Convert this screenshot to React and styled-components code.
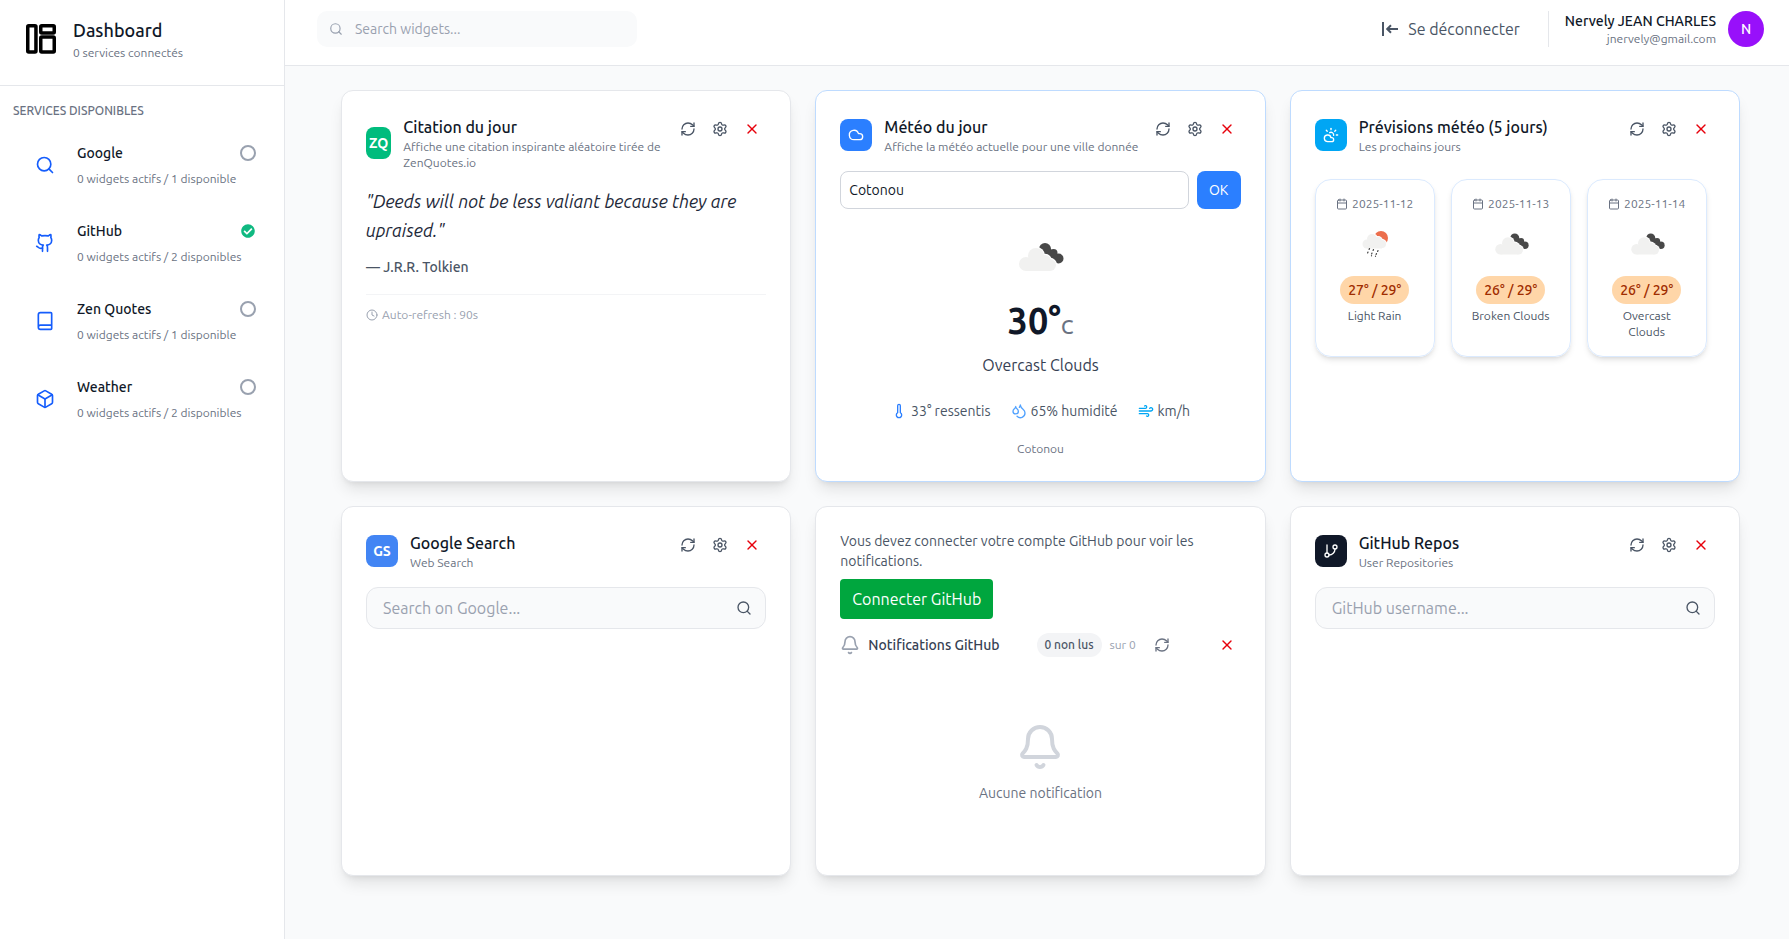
import React, { useState } from 'react'
import styled, { createGlobalStyle } from 'styled-components'
import {
    Bell,
    Book,
    Box,
    Calendar,
    Clock,
    Cloud,
    CloudSun,
    Droplets,
    GitBranch,
    Github,
    RefreshCw,
    Search,
    Settings,
    Thermometer,
    Wind,
    X,
} from 'lucide-react'
import { FaCheckCircle } from 'react-icons/fa'

const services = [
    { name: 'Google', detail: '0 widgets actifs / 1 disponible', Icon: Search, connected: false },
    { name: 'GitHub', detail: '0 widgets actifs / 2 disponibles', Icon: Github, connected: true },
    { name: 'Zen Quotes', detail: '0 widgets actifs / 1 disponible', Icon: Book, connected: false },
    { name: 'Weather', detail: '0 widgets actifs / 2 disponibles', Icon: Box, connected: false },
]

const forecast = [
    { date: '2025-11-12', icon: 'rain', temps: '27° / 29°', label: 'Light Rain' },
    { date: '2025-11-13', icon: 'clouds', temps: '26° / 29°', label: 'Broken Clouds' },
    { date: '2025-11-14', icon: 'clouds', temps: '26° / 29°', label: 'Overcast Clouds' },
]

function DashboardLogo() {
    return (
        <svg width="36" height="36" viewBox="0 0 36 36" fill="none" stroke="#000" strokeWidth="3.5" strokeLinejoin="round">
            <rect x="4.75" y="3.75" width="8.2" height="26.2" rx="1" />
            <rect x="17.75" y="3.75" width="13.5" height="7.2" rx="1" />
            <rect x="17.75" y="15" width="13.5" height="15" rx="1" />
        </svg>
    )
}

function LogoutIcon() {
    return (
        <svg width="20" height="20" viewBox="0 0 20 20" fill="none" stroke="currentColor" strokeWidth="2">
            <path d="M3 3v14M18 10H7.500M11 6.200L7.200 10L11 13.800" />
        </svg>
    )
}

function CloudsIcon({ size }) {
    const puffs = [[18, 39, 7], [28, 31, 8], [37, 36, 6], [42, 40, 6]]

    return (
        <svg width={size} height={size} viewBox="0 0 64 64">
            <g fill="#484848">
                <circle cx="37" cy="24" r="6" />
                <circle cx="45.5" cy="28" r="4" />
                <circle cx="50.5" cy="33.500" r="5" />
                <path d="M33 28L49 38L50 30L40 22Z" />
            </g>
            <g fill="#fff">
                {puffs.map(([cx, cy, r]) => <circle key={cx} cx={cx} cy={cy} r={r + 1.2} />)}
            </g>
            <g fill="#f1f1f0">
                {puffs.map(([cx, cy, r]) => <circle key={cx} cx={cx} cy={cy} r={r} />)}
                <rect x="18" y="34" width="24" height="12" />
            </g>
        </svg>
    )
}

function RainIcon({ size }) {
    const puffs = [[16, 24, 4.5], [21, 19, 5], [27, 21, 4], [31, 24, 4]]

    return (
        <svg width={size} height={size} viewBox="0 0 48 48">
            <circle cx="30" cy="18" r="7" fill="#ec6e4c" />
            <g fill="#fff">
                {puffs.map(([cx, cy, r]) => <circle key={cx} cx={cx} cy={cy} r={r + 1} />)}
            </g>
            <g fill="#f1f1f0">
                {puffs.map(([cx, cy, r]) => <circle key={cx} cx={cx} cy={cy} r={r} />)}
                <rect x="16" y="22" width="15" height="6.500" />
            </g>
            <g stroke="#484848" strokeWidth="1.200" strokeLinecap="round">
                <path d="M18.500 28.500l-.4 1M22.500 29.500l-.4 1M27 30.500l-.4 1" />
                <path d="M17 32l-.4 1M21 33l-.4 1M25.500 33.500l-.4 1M20.500 35.500v.3M24.500 36v.3" />
            </g>
        </svg>
    )
}

function WidgetHeader({ title, subtitle, icon, color }) {
    return (
        <HeaderRow>
            <HeaderInfo>
                <Badge $color={color}>{icon}</Badge>
                <div>
                    <WidgetTitle>{title}</WidgetTitle>
                    <WidgetSubtitle>{subtitle}</WidgetSubtitle>
                </div>
            </HeaderInfo>
            <Actions>
                <IconButton aria-label="Actualiser"><RefreshCw size={16} /></IconButton>
                <IconButton aria-label="Configurer"><Settings size={16} /></IconButton>
                <IconButton aria-label="Supprimer" $danger><X size={16} /></IconButton>
            </Actions>
        </HeaderRow>
    )
}

function SearchField({ placeholder }) {
    return (
        <SearchBox>
            <SearchInput type="text" placeholder={placeholder} aria-label={placeholder} />
            <SubmitButton aria-label="Rechercher"><Search size={16} /></SubmitButton>
        </SearchBox>
    )
}

function App() {
    const [city, setCity] = useState('Cotonou')

    return (
        <Page>
            <GlobalStyle />
            <Sidebar>
                <Brand>
                    <DashboardLogo />
                    <div>
                        <BrandName>Dashboard</BrandName>
                        <SmallText>0 services connectés</SmallText>
                    </div>
                </Brand>
                <SectionTitle>SERVICES DISPONIBLES</SectionTitle>
                <ServiceList>
                    {services.map(({ name, detail, Icon, connected }) => (
                        <Service key={name}>
                            <Icon size={20} />
                            <ServiceText>
                                <ServiceTop>
                                    {name}
                                    <Status>
                                        {connected ? <FaCheckCircle size={14} /> : <EmptyCircle />}
                                    </Status>
                                </ServiceTop>
                                <SmallText>{detail}</SmallText>
                            </ServiceText>
                        </Service>
                    ))}
                </ServiceList>
            </Sidebar>

            <Content>
                <TopBar>
                    <TopSearch>
                        <Search size={14} />
                        <TopInput type="text" placeholder="Search widgets..." aria-label="Search widgets..." />
                    </TopSearch>
                    <Account>
                        <Logout>
                            <LogoutIcon />
                            Se déconnecter
                        </Logout>
                        <User>
                            <UserText>
                                <UserName>Nervely JEAN CHARLES</UserName>
                                <UserEmail>jnervely@gmail.com</UserEmail>
                            </UserText>
                            <Avatar>N</Avatar>
                        </User>
                    </Account>
                </TopBar>

                <Grid>
                    <Card>
                        <WidgetHeader
                            title="Citation du jour"
                            subtitle="Affiche une citation inspirante aléatoire tirée de ZenQuotes.io"
                            icon="ZQ"
                            color="#00bc7d"
                        />
                        <Quote>"Deeds will not be less valiant because they are upraised."</Quote>
                        <Author>— J.R.R. Tolkien</Author>
                        <QuoteFooter>
                            <Clock size={12} />
                            Auto-refresh : 90s
                        </QuoteFooter>
                    </Card>

                    <Card $blue>
                        <WidgetHeader
                            title="Météo du jour"
                            subtitle="Affiche la météo actuelle pour une ville donnée"
                            icon={<Cloud size={16} />}
                            color="#2b7fff"
                        />
                        <CityForm onSubmit={(e) => e.preventDefault()}>
                            <CityInput value={city} onChange={(e) => setCity(e.target.value)} aria-label="Ville" />
                            <OkButton type="submit">OK</OkButton>
                        </CityForm>
                        <Weather>
                            <CloudsIcon size={64} />
                            <Temperature>30°<Unit>C</Unit></Temperature>
                            <Conditions>Overcast Clouds</Conditions>
                            <Details>
                                <Detail $color="#2b7fff"><Thermometer size={16} />33° ressentis</Detail>
                                <Detail $color="#51a2ff"><Droplets size={16} />65% humidité</Detail>
                                <Detail $color="#00a6f4"><Wind size={16} />km/h</Detail>
                            </Details>
                            <WidgetSubtitle>Cotonou</WidgetSubtitle>
                        </Weather>
                    </Card>

                    <Card $blue>
                        <WidgetHeader
                            title="Prévisions météo (5 jours)"
                            subtitle="Les prochains jours"
                            icon={<CloudSun size={16} />}
                            color="#00a6f4"
                        />
                        <Days>
                            {forecast.map(day => (
                                <Day key={day.date}>
                                    <DayDate><Calendar size={12} />{day.date}</DayDate>
                                    {day.icon === 'rain' ? <RainIcon size={48} /> : <CloudsIcon size={48} />}
                                    <Temps>{day.temps}</Temps>
                                    <DayLabel>{day.label}</DayLabel>
                                </Day>
                            ))}
                        </Days>
                    </Card>

                    <Card>
                        <WidgetHeader title="Google Search" subtitle="Web Search" icon="GS" color="#4285f4" />
                        <SearchField placeholder="Search on Google..." />
                    </Card>

                    <Card>
                        <Notice>Vous devez connecter votre compte GitHub pour voir les notifications.</Notice>
                        <ConnectButton>Connecter GitHub</ConnectButton>
                        <NotifHeader>
                            <NotifTitle><Bell size={20} />Notifications GitHub</NotifTitle>
                            <NotifCounts>
                                <Unread>0 non lus</Unread>
                                <Total>sur 0</Total>
                                <RefreshButton aria-label="Actualiser"><RefreshCw size={16} /></RefreshButton>
                            </NotifCounts>
                            <IconButton aria-label="Supprimer" $danger><X size={16} /></IconButton>
                        </NotifHeader>
                        <Empty>
                            <Bell size={48} />
                            Aucune notification
                        </Empty>
                    </Card>

                    <Card>
                        <WidgetHeader
                            title="GitHub Repos"
                            subtitle="User Repositories"
                            icon={<GitBranch size={16} />}
                            color="#101828"
                        />
                        <SearchField placeholder="GitHub username..." />
                    </Card>
                </Grid>
            </Content>
        </Page>
    )
}

export default App


const GlobalStyle = createGlobalStyle`
    * {
        box-sizing: border-box;
    }
    body {
        margin: 0;
        background: #f9fafb;
        color: #101828;
        font-family: Ubuntu, Roboto, "Noto Sans", sans-serif;
        font-size: 16px;
        line-height: 24px;
    }
    button, input {
        font: inherit;
        color: inherit;
    }
    button {
        border: 0;
        background: none;
        padding: 0;
        cursor: pointer;
    }
    input::placeholder {
        color: #99a1af;
        opacity: 1;
    }
    svg {
        flex-shrink: 0;
    }
`

const Page = styled.div`
    display: flex;
    min-height: 100vh;
`

const Sidebar = styled.aside`
    width: 285px;
    flex-shrink: 0;
    background: white;
    border-right: 1px solid #e5e7eb;
`

const Brand = styled.div`
    display: flex;
    align-items: center;
    gap: 14px;
    padding: 17px 23px 22px;
    border-bottom: 1px solid #e5e7eb;
`

const BrandName = styled.h1`
    margin: 0;
    font-size: 18px;
    font-weight: 550;
    line-height: 26px;
`

const SmallText = styled.div`
    font-size: 12px;
    line-height: 20px;
    color: #6a7282;
`

const SectionTitle = styled.h2`
    margin: 17px 13px 14px;
    font-size: 12px;
    font-weight: 500;
    line-height: 16px;
    color: #6a7282;
`

const ServiceList = styled.div`
    display: flex;
    flex-direction: column;
    gap: 14px;
`

const Service = styled.button`
    display: flex;
    align-items: center;
    gap: 22px;
    padding: 8px 28px 8px 35px;
    height: 64px;
    text-align: left;
    color: #155dfc;
`

const ServiceText = styled.div`
    flex: 1;
`

const ServiceTop = styled.div`
    display: flex;
    align-items: center;
    justify-content: space-between;
    margin-bottom: 4px;
    font-size: 14px;
    font-weight: 500;
    color: #101828;
`

const Status = styled.span`
    display: flex;
    justify-content: center;
    width: 16px;
    color: #10b981;
`

const EmptyCircle = styled.span`
    width: 16px;
    height: 16px;
    border: 2px solid #99a1af;
    border-radius: 50%;
`

const Content = styled.div`
    flex: 1;
    min-width: 0;
`

const TopBar = styled.header`
    display: flex;
    align-items: flex-start;
    justify-content: space-between;
    height: 66px;
    padding: 11px 25px 0 32px;
    background: white;
    border-bottom: 1px solid #e5e7eb;
`

const TopSearch = styled.div`
    display: flex;
    align-items: center;
    gap: 12px;
    width: 320px;
    height: 36px;
    padding: 0 12px;
    border-radius: 10px;
    background: #f9fafb;
    color: #99a1af;
`

const TopInput = styled.input`
    flex: 1;
    min-width: 0;
    border: 0;
    padding: 0;
    background: none;
    font-size: 14px;
    outline: none;
`

const Account = styled.div`
    display: flex;
    align-items: center;
    gap: 28px;
`

const Logout = styled.button`
    display: flex;
    align-items: center;
    gap: 8px;
    color: #4a5565;
`

const User = styled.div`
    display: flex;
    align-items: center;
    gap: 12px;
    height: 36px;
    padding-left: 16px;
    border-left: 1px solid #e5e7eb;
`

const UserText = styled.div`
    text-align: right;
`

const UserName = styled.div`
    font-size: 14px;
    font-weight: 500;
    line-height: 20px;
`

const UserEmail = styled(SmallText)`
    line-height: 16px;
`

const Avatar = styled.div`
    display: flex;
    align-items: center;
    justify-content: center;
    width: 36px;
    height: 36px;
    border-radius: 50%;
    background: #9810fa;
    color: white;
    font-size: 14px;
    font-weight: 500;
`

const Grid = styled.main`
    display: grid;
    grid-template-columns: repeat(3, minmax(0, 1fr));
    grid-template-rows: auto minmax(370px, auto);
    gap: 24px;
    padding: 24px 49px 62px 56px;
`

const Card = styled.section`
    padding: 24px;
    background: white;
    border: 1px solid ${props => props.$blue ? '#bedbff' : '#e5e7eb'};
    border-radius: 12px;
    box-shadow: 0 10px 15px -3px rgba(0, 0, 0, 0.1), 0 4px 6px -4px rgba(0, 0, 0, 0.1);
`

const HeaderRow = styled.div`
    display: flex;
    align-items: flex-start;
    justify-content: space-between;
    gap: 8px;
    margin-bottom: 16px;
`

const HeaderInfo = styled.div`
    display: flex;
    align-items: center;
    gap: 12px;
    min-width: 0;
`

const Badge = styled.div`
    display: flex;
    align-items: center;
    justify-content: center;
    width: 32px;
    height: 32px;
    border-radius: 8px;
    background: ${props => props.$color};
    color: white;
    font-size: 14px;
    font-weight: 600;
`

const WidgetTitle = styled.h3`
    margin: 0;
    font-size: 16px;
    font-weight: 550;
    line-height: 24px;
`

const WidgetSubtitle = styled.div`
    font-size: 12px;
    line-height: 16px;
    color: #6a7282;
`

const Actions = styled.div`
    display: flex;
    gap: 4px;
`

const IconButton = styled.button`
    display: flex;
    align-items: center;
    justify-content: center;
    width: 28px;
    height: 28px;
    color: ${props => props.$danger ? '#e7000b' : '#4a5565'};
`

const Quote = styled.p`
    margin: 0;
    font-size: 18px;
    font-style: italic;
    line-height: 29px;
    color: #1e2939;
`

const Author = styled.div`
    margin-top: 12px;
    font-size: 14px;
    font-weight: 500;
    line-height: 20px;
    color: #4a5565;
`

const QuoteFooter = styled.div`
    display: flex;
    align-items: center;
    gap: 4px;
    margin-top: 17px;
    padding-top: 12px;
    border-top: 1px solid #f3f4f6;
    font-size: 12px;
    line-height: 16px;
    color: #99a1af;
`

const CityForm = styled.form`
    display: flex;
    gap: 8px;
    height: 38px;
`

const CityInput = styled.input`
    flex: 1;
    min-width: 0;
    padding: 0 8px;
    border: 1px solid #d1d5dc;
    border-radius: 8px;
    font-size: 14px;
`

const OkButton = styled.button`
    width: 44px;
    border-radius: 8px;
    background: #2b7fff;
    color: white;
    font-size: 14px;
`

const Weather = styled.div`
    display: flex;
    flex-direction: column;
    align-items: center;
    padding-top: 16px;
`

const Temperature = styled.div`
    margin-top: 12px;
    font-size: 36px;
    font-weight: 700;
    line-height: 40px;
`

const Unit = styled.span`
    font-size: 20px;
    font-weight: 500;
    color: #6a7282;
`

const Conditions = styled.div`
    margin-top: 6px;
    color: #364153;
`

const Details = styled.div`
    display: flex;
    gap: 20px;
    margin: 22px 0 18px;
    font-size: 14px;
    color: #4a5565;
`

const Detail = styled.div`
    display: flex;
    align-items: center;
    gap: 4px;
    svg {
        color: ${props => props.$color};
    }
`

const Days = styled.div`
    display: flex;
    gap: 16px;
    padding-top: 8px;
`

const Day = styled.div`
    display: flex;
    flex-direction: column;
    align-items: center;
    width: 120px;
    padding: 16px;
    border: 1px solid #dbeafe;
    border-radius: 16px;
    box-shadow: 0 4px 6px -1px rgba(0, 0, 0, 0.1), 0 2px 4px -2px rgba(0, 0, 0, 0.1);
`

const DayDate = styled.div`
    display: flex;
    align-items: center;
    gap: 4px;
    margin-bottom: 8px;
    font-size: 12px;
    line-height: 16px;
    color: #6a7282;
`

const Temps = styled.div`
    margin: 8px 0 4px;
    padding: 4px 8px;
    border-radius: 14px;
    background: #ffd6a8;
    color: #9f2d00;
    font-size: 14px;
    font-weight: 550;
    line-height: 20px;
    white-space: nowrap;
`

const DayLabel = styled.div`
    font-size: 12px;
    line-height: 16px;
    text-align: center;
    color: #4a5565;
`

const SearchBox = styled.div`
    display: flex;
    align-items: center;
    height: 42px;
    padding: 0 8px 0 16px;
    border: 1px solid #e5e7eb;
    border-radius: 12px;
    background: #f9fafb;
`

const SearchInput = styled.input`
    flex: 1;
    min-width: 0;
    border: 0;
    padding: 0;
    background: none;
    outline: none;
`

const SubmitButton = styled(IconButton)`
    width: 26px;
`

const Notice = styled.div`
    margin-bottom: 8px;
    font-size: 14px;
    line-height: 20px;
    color: #4a5565;
`

const ConnectButton = styled.button`
    padding: 8px 12px;
    border-radius: 4px;
    background: #00a63e;
    color: white;
`

const NotifHeader = styled.div`
    display: flex;
    align-items: center;
    justify-content: space-between;
    margin-top: 12px;
`

const NotifTitle = styled.div`
    display: flex;
    align-items: center;
    gap: 8px;
    font-size: 14px;
    font-weight: 500;
    color: #364153;
    svg {
        color: #99a1af;
    }
`

const NotifCounts = styled.div`
    display: flex;
    align-items: center;
    gap: 8px;
`

const RefreshButton = styled(IconButton)`
    width: 32px;
    padding-left: 4px;
    color: #6a7282;
`

const Unread = styled.span`
    padding: 4px 8px;
    border-radius: 12px;
    background: #f3f4f6;
    color: #4a5565;
    font-size: 12px;
    font-weight: 500;
    line-height: 16px;
`

const Total = styled.span`
    font-size: 12px;
    color: #99a1af;
`

const Empty = styled.div`
    display: flex;
    flex-direction: column;
    align-items: center;
    gap: 12px;
    padding-top: 64px;
    font-size: 14px;
    line-height: 20px;
    color: #6a7282;
    svg {
        color: #d1d5dc;
    }
`
